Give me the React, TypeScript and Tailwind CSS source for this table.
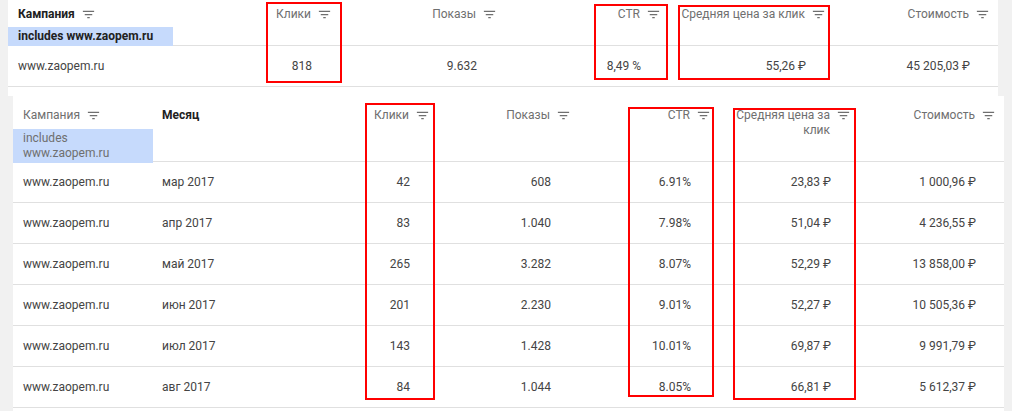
import React from "react";

// report tables: totals + by month, with red highlight frames over some columns

const Filter = () => (
  <svg viewBox="0 0 24 24" className="w-[15px] h-[15px] shrink-0 fill-[#6f6f6f]">
    <path d="M10 18h4v-2h-4v2zM3 6v2h18V6H3zm3 7h12v-2H6v2z" />
  </svg>
);

const topCols = ["Клики", "Показы", "CTR", "Средняя цена за клик", "Стоимость"];
const topValues = ["818", "9.632", "8,49 %", "55,26 ₽", "45 205,03 ₽"];

const rows = [
  ["мар 2017", "42", "608", "6.91%", "23,83 ₽", "1 000,96 ₽"],
  ["апр 2017", "83", "1.040", "7.98%", "51,04 ₽", "4 236,55 ₽"],
  ["май 2017", "265", "3.282", "8.07%", "52,29 ₽", "13 858,00 ₽"],
  ["июн 2017", "201", "2.230", "9.01%", "52,27 ₽", "10 505,36 ₽"],
  ["июл 2017", "143", "1.428", "10.01%", "69,87 ₽", "9 991,79 ₽"],
  ["авг 2017", "84", "1.044", "8.05%", "66,81 ₽", "5 612,37 ₽"],
];

const Frame = ({ className }: { className: string }) => (
  <div className={"absolute border-2 border-[#ff0000] pointer-events-none " + className} />
);

export default function App() {
  return (
    <div className="relative w-[1012px] h-[411px] overflow-hidden bg-[#f1f1f1] font-['Roboto',sans-serif] text-[12px] text-[#444444]">
      {/* totals table */}
      <div className="ml-[8px] w-[990px] h-[96px] bg-white">
        <div className="grid grid-cols-[172px_160px_165px_164px_165px_164px] h-[46px] border-b border-[#e0e0e0]">
          <div className="flex flex-col">
            <div className="flex items-start gap-[6px] pl-[10px] pt-[4px] leading-[20px]">
              <span className="font-bold text-[#212121]">Кампания</span>
              <span className="mt-[3px]"><Filter /></span>
            </div>
            <div className="mt-[3px] w-[165px] h-[19px] bg-[#c6dafc] pl-[10px] leading-[19px] font-bold text-[#212121]">
              includes www.zaopem.ru
            </div>
          </div>
          {topCols.map((c) => (
            <div key={c} className="flex justify-end items-start gap-[6px] pr-[8px] pt-[4px] leading-[20px] text-[#6f6f6f]">
              <span>{c}</span>
              <span className="mt-[3px]"><Filter /></span>
            </div>
          ))}
        </div>
        <div className="grid grid-cols-[172px_160px_165px_164px_165px_164px] h-[41px] border-b border-[#e0e0e0] items-center">
          <div className="pl-[10px]">www.zaopem.ru</div>
          {topValues.map((v) => (
            <div key={v} className="text-right pr-[28px]">{v}</div>
          ))}
        </div>
      </div>

      {/* monthly table */}
      <div className="ml-[13px] w-[991px] h-[315px] bg-white">
        <div className="grid grid-cols-[140px_148px_137px_141px_140px_140px_145px] h-[66px] border-b border-[#e0e0e0] leading-[15px]">
          <div className="flex flex-col">
            <div className="flex items-start gap-[6px] pl-[10px] pt-[12px] text-[#6f6f6f]">
              <span>Кампания</span>
              <Filter />
            </div>
            <div className="mt-[6px] w-[140px] h-[34px] bg-[#c6dafc] pl-[10px] py-[2px] text-[#6f6f6f]">
              includes
              <br />
              www.zaopem.ru
            </div>
          </div>
          <div className="pl-[9px] pt-[12px] font-bold text-[#212121]">Месяц</div>
          {topCols.map((c) => (
            <div key={c} className="flex justify-end items-start gap-[6px] pr-[8px] pt-[12px] text-[#6f6f6f]">
              <span className={c.length > 12 ? "w-[96px] text-right" : ""}>{c}</span>
              <Filter />
            </div>
          ))}
        </div>
        {rows.map((r) => (
          <div key={r[0]} className="grid grid-cols-[140px_148px_137px_141px_140px_140px_145px] h-[41px] border-b border-[#e0e0e0] items-center">
            <div className="pl-[10px]">www.zaopem.ru</div>
            <div className="pl-[9px]">{r[0]}</div>
            {r.slice(1).map((v, i) => (
              <div key={i} className="text-right pr-[28px]">{v}</div>
            ))}
          </div>
        ))}
      </div>

      <Frame className="left-[266px] top-[2px] w-[76px] h-[81px]" />
      <Frame className="left-[594px] top-[4px] w-[74px] h-[76px]" />
      <Frame className="left-[678px] top-[5px] w-[152px] h-[75px]" />
      <Frame className="left-[365px] top-[103px] w-[70px] h-[297px]" />
      <Frame className="left-[628px] top-[107px] w-[86px] h-[290px]" />
      <Frame className="left-[733px] top-[108px] w-[123px] h-[292px]" />
    </div>
  );
}
